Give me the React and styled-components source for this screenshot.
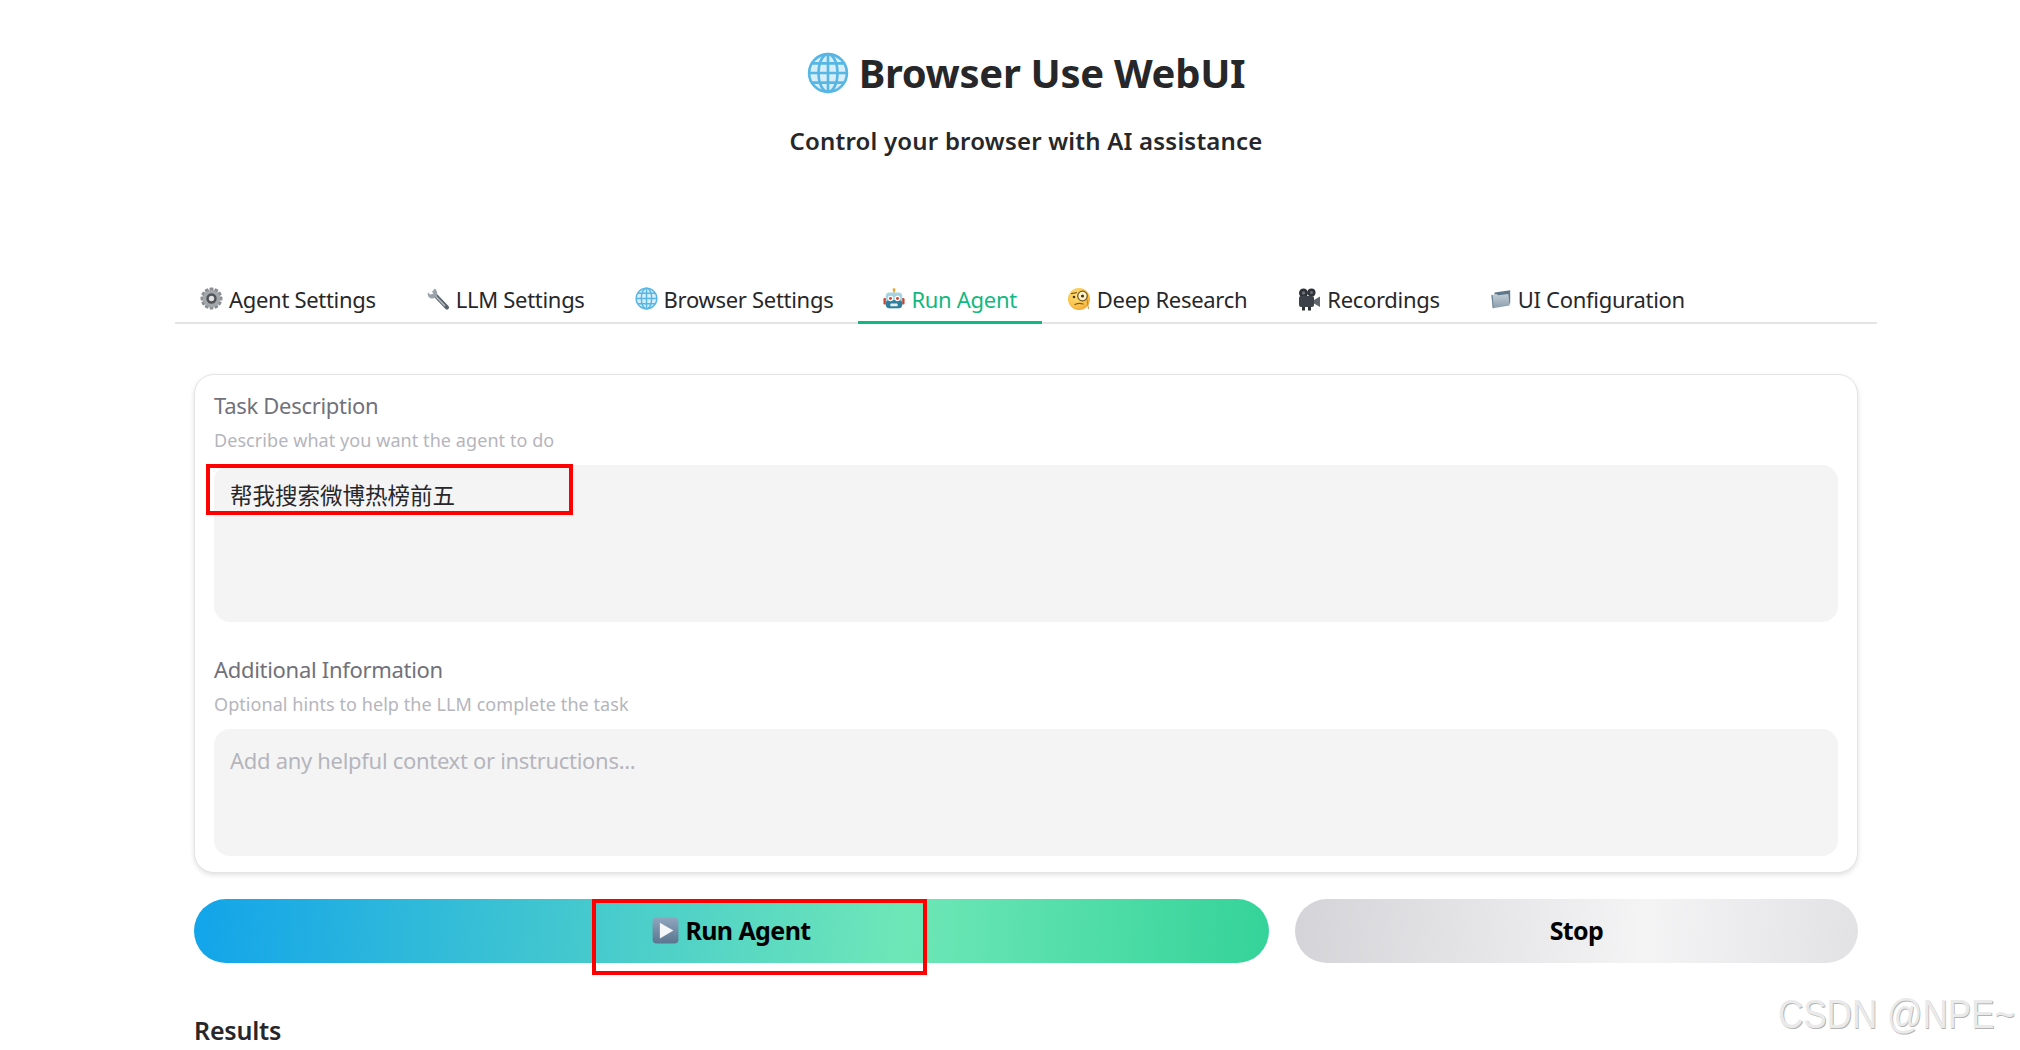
import React from "react";
import styled, { createGlobalStyle } from "styled-components";

const Global = createGlobalStyle`
  html, body { margin: 0; padding: 0; background: #fff; }
  body { font-family: "Noto Sans", "Noto Sans CJK SC", sans-serif; color: #27272a; }
`;
const Page = styled.div`
  position: relative; width: 2020px; height: 1050px; overflow: hidden; box-sizing: border-box;
  padding: 0 143px 0 175px; display: flex; flex-direction: column;
`;
const Title = styled.h1`
  margin: 47px 0 0; height: 52px; display: flex; align-items: center; justify-content: center; gap: 10px;
  font-size: 40px; line-height: 52px; font-weight: 700; color: #27272a; letter-spacing: -0.3px;
`;
const Subtitle = styled.h2`
  margin: 27px 0 0; text-align: center; font-size: 24px; line-height: 30px; font-weight: 600; color: #27272a; letter-spacing: 0.2px;
`;
const TabBar = styled.div`
  margin-top: 117px; height: 49px; display: flex; border-bottom: 2px solid #e4e4e7; box-sizing: content-box;
`;
const Tab = styled.div`
  display: flex; align-items: center; gap: 6px; padding: 0 25px; height: 51px; font-size: 22px; letter-spacing: -0.3px; white-space: nowrap;
  color: ${p => p.$active ? "#10b981" : "#27272a"};
  box-shadow: ${p => p.$active ? "inset 0 -3px 0 #10b981" : "none"};
  margin-bottom: -2px;
`;
const Body = styled.div`
  padding: 0 19px; display: flex; flex-direction: column;
`;
const Card = styled.div`
  margin-top: 50px; border: 1.5px solid #e4e4e7; border-radius: 20px; padding: 15px 19px 16px; background: #fff;
  box-shadow: 0 2px 5px rgba(0,0,0,0.12); height: 499px; box-sizing: border-box; display: flex; flex-direction: column;
`;
const Label = styled.div`
  font-size: 22px; line-height: 30px; color: #71717a; letter-spacing: -0.3px;
  margin-top: ${p => p.$top || 0}px;
`;
const Hint = styled.div`
  font-size: 18px; line-height: 24px; margin-top: 8px; color: #b5b5bc; letter-spacing: 0.07px;
`;
const Field = styled.div`
  margin-top: 13px; height: ${p => p.$h}px; background: #f4f4f5; border-radius: 16px; padding: 16px 16px; box-sizing: border-box;
  font-size: ${p => p.$muted ? 22 : 22.5}px; line-height: 30px; color: ${p => p.$muted ? "#b5b5bc" : "#27272a"};
  letter-spacing: ${p => p.$muted ? -0.3 : 0}px;
`;
const Actions = styled.div`
  margin-top: 26px; display: grid; grid-template-columns: 1075px 563px; column-gap: 26px;
`;
const Action = styled.div`
  height: 64px; box-sizing: border-box; padding-bottom: 2px; border-radius: 32px; display: flex; align-items: center; justify-content: center; gap: 6px;
  font-size: 25px; font-weight: 700; color: #000; letter-spacing: -0.6px;
  background: ${p => p.$primary
    ? "linear-gradient(93deg, #12a4ea 0%, #6ee7b7 66%, #34d399 100%)"
    : "linear-gradient(93deg, #d4d4d8 0%, #f4f4f5 62%, #e2e2e5 100%)"};
`;
const Results = styled.div`
  margin-top: 51px; font-size: 25px; line-height: 32px; font-weight: 600; color: #27272a; letter-spacing: -0.2px;
`;
const Mark = styled.div`
  position: absolute; border: 4px solid #f00; box-sizing: border-box; pointer-events: none;
  left: ${p => p.$x}px; top: ${p => p.$y}px; width: ${p => p.$w}px; height: ${p => p.$h}px;
`;
const Watermark = styled.div`
  position: absolute; left: 1778px; top: 991px; font-family: "Liberation Sans", sans-serif; font-size: 40px; line-height: 46px;
  color: #eaeaea; white-space: nowrap; transform: scaleX(0.875); transform-origin: left center;
  text-shadow: 1px 1px 0 #b4b4b4;
`;
const Ico = styled.svg`
  flex: none; display: block;
`;

const Globe = ({ s = 23 }) => (
  <Ico width={s} height={s} viewBox="0 0 24 24" fill="none">
    <circle cx="12" cy="12" r="11" fill="#d5eefa" />
    <g stroke="#58b6e4" strokeWidth="1.5">
      <circle cx="12" cy="12" r="10.8" />
      <ellipse cx="12" cy="12" rx="5.4" ry="10.8" />
      <path d="M12 1.2v21.6M1.2 12h21.6M3 6.5h18M3 17.5h18" />
    </g>
  </Ico>
);
const Gear = () => (
  <Ico width="23" height="23" viewBox="0 0 24 24">
    <g fill="#8b8f94">
      {[0,30,60,90,120,150].map(a => <rect key={a} x="10" y="0.6" width="4" height="22.8" rx="0.8" transform={`rotate(${a} 12 12)`} />)}
    </g>
    <circle cx="12" cy="12" r="9" fill="#a3a7ab" />
    <circle cx="12" cy="12" r="5.4" fill="#4f5358" />
    <circle cx="12" cy="12" r="2.8" fill="#dfe1e3" />
  </Ico>
);
const Wrench = () => (
  <Ico width="24" height="24" viewBox="0 0 24 24">
    <path d="M10 9 L21 20.5" stroke="#59636b" strokeWidth="4" strokeLinecap="round" />
    <path d="M9 8.5 L19 19" stroke="#b6bdc3" strokeWidth="1.6" />
    <path d="M9 1.5 L6 4.8 L7.5 6.8 L4 7.6 L2 5.2 C1 8.5 3 11.5 6.5 11.5 C10 11.5 12 8 11 5 C10.6 3.5 10 2.2 9 1.5Z" fill="#9aa3aa" />
  </Ico>
);
const Robot = () => (
  <Ico width="22" height="22" viewBox="0 0 24 24">
    <rect x="11" y="1" width="2" height="4" fill="#f4a62a" />
    <circle cx="12" cy="2" r="1.6" fill="#f4a62a" />
    <rect x="0.5" y="11" width="3" height="7" rx="1.2" fill="#c8452f" />
    <rect x="20.5" y="11" width="3" height="7" rx="1.2" fill="#c8452f" />
    <rect x="3" y="5" width="18" height="17" rx="4" fill="#a6d3e0" />
    <rect x="3" y="13" width="18" height="9" rx="4" fill="#2f7f9c" />
    <circle cx="8.2" cy="11.5" r="3" fill="#fff" /><circle cx="8.2" cy="11.5" r="1.6" fill="#d5402b" />
    <circle cx="15.8" cy="11.5" r="3" fill="#fff" /><circle cx="15.8" cy="11.5" r="1.6" fill="#d5402b" />
    <rect x="8" y="17" width="8" height="3" rx="1" fill="#e8eef0" />
  </Ico>
);
const Monocle = () => (
  <Ico width="24" height="24" viewBox="0 0 24 24" fill="none">
    <defs>
      <radialGradient id="face" cx="0.4" cy="0.35" r="0.75"><stop offset="0" stopColor="#fde27a" /><stop offset="0.7" stopColor="#f9bf45" /><stop offset="1" stopColor="#ef9330" /></radialGradient>
    </defs>
    <circle cx="12" cy="12" r="11" fill="url(#face)" />
    <circle cx="15.5" cy="9" r="4.8" fill="#fdf3cc" stroke="#7a5a20" strokeWidth="1.3" />
    <circle cx="15.5" cy="9" r="1.6" fill="#4a3410" />
    <circle cx="7" cy="10" r="1.3" fill="#4a3410" />
    <path d="M4.5 6.6 L9.5 5.6" stroke="#8a5a1e" strokeWidth="1.2" strokeLinecap="round" />
    <path d="M8 17.5 Q12 15.5 16 17" stroke="#8a5a1e" strokeWidth="1.3" strokeLinecap="round" />
    <path d="M20 12 L21.5 22" stroke="#a57a30" strokeWidth="0.8" />
  </Ico>
);
const Camera = () => (
  <Ico width="24" height="24" viewBox="0 0 24 24">
    <circle cx="6.5" cy="6" r="4.5" fill="#2f3338" /><circle cx="6.5" cy="6" r="1.8" fill="#6a7077" />
    <circle cx="14.5" cy="5.5" r="4" fill="#2f3338" /><circle cx="14.5" cy="5.5" r="1.5" fill="#6a7077" />
    <rect x="2" y="9" width="15" height="11" rx="2" fill="#3d4248" />
    <path d="M17 13 L23 9.5 V20 L17 16.5Z" fill="#5f656c" />
    <rect x="5" y="20" width="3" height="3.5" fill="#2f3338" /><rect x="11" y="20" width="3" height="3.5" fill="#2f3338" />
  </Ico>
);
const Folder = () => (
  <Ico width="22" height="22" viewBox="0 0 24 24">
    <defs>
      <linearGradient id="fold" x1="0" y1="0" x2="0" y2="1"><stop offset="0" stopColor="#c3ced6" /><stop offset="1" stopColor="#8a9dac" /></linearGradient>
    </defs>
    <path d="M5 5 L22 2.5 V17 L5 20Z" fill="#5f7788" />
    <path d="M1.5 7.5 L7 6.5 L9 8 L20 6.5 L21.5 19 L3 22Z" fill="url(#fold)" />
    <path d="M1.5 7.5 L3 22 L4 21.8 L3 8Z" fill="#6f8698" />
  </Ico>
);
const Play = () => (
  <Ico width="27" height="27" viewBox="0 0 24 24">
    <defs>
      <linearGradient id="pl" x1="0" y1="0" x2="0" y2="1"><stop offset="0" stopColor="#8fa6bd" /><stop offset="1" stopColor="#5a7590" /></linearGradient>
    </defs>
    <rect x="0.5" y="0.5" width="23" height="23" rx="3.5" fill="url(#pl)" />
    <path d="M7 5 L19 12 L7 19Z" fill="#f4f6f8" />
  </Ico>
);

const tabs = [
  [<Gear key="g" />, "Agent Settings"],
  [<Wrench key="w" />, "LLM Settings"],
  [<Globe key="b" />, "Browser Settings"],
  [<Robot key="r" />, "Run Agent", true],
  [<Monocle key="m" />, "Deep Research"],
  [<Camera key="c" />, "Recordings"],
  [<Folder key="f" />, "UI Configuration"],
];

export default function App() {
  return (
    <Page>
      <Global />
      <Title><Globe s={42} />Browser Use WebUI</Title>
      <Subtitle>Control your browser with AI assistance</Subtitle>
      <TabBar>
        {tabs.map(([icon, label, active]) => (
          <Tab key={label} $active={active}>{icon}{label}</Tab>
        ))}
      </TabBar>
      <Body>
        <Card>
          <Label>Task Description</Label>
          <Hint>Describe what you want the agent to do</Hint>
          <Field $h={158}>帮我搜索微博热榜前五</Field>
          <Label $top={32}>Additional Information</Label>
          <Hint>Optional hints to help the LLM complete the task</Hint>
          <Field $h={127} $muted>Add any helpful context or instructions...</Field>
        </Card>
        <Actions>
          <Action $primary><Play />Run Agent</Action>
          <Action>Stop</Action>
        </Actions>
        <Results>Results</Results>
      </Body>
      <Mark $x={206} $y={464} $w={367} $h={51} />
      <Mark $x={592} $y={899} $w={335} $h={76} />
      <Watermark>CSDN @NPE~</Watermark>
    </Page>
  );
}
